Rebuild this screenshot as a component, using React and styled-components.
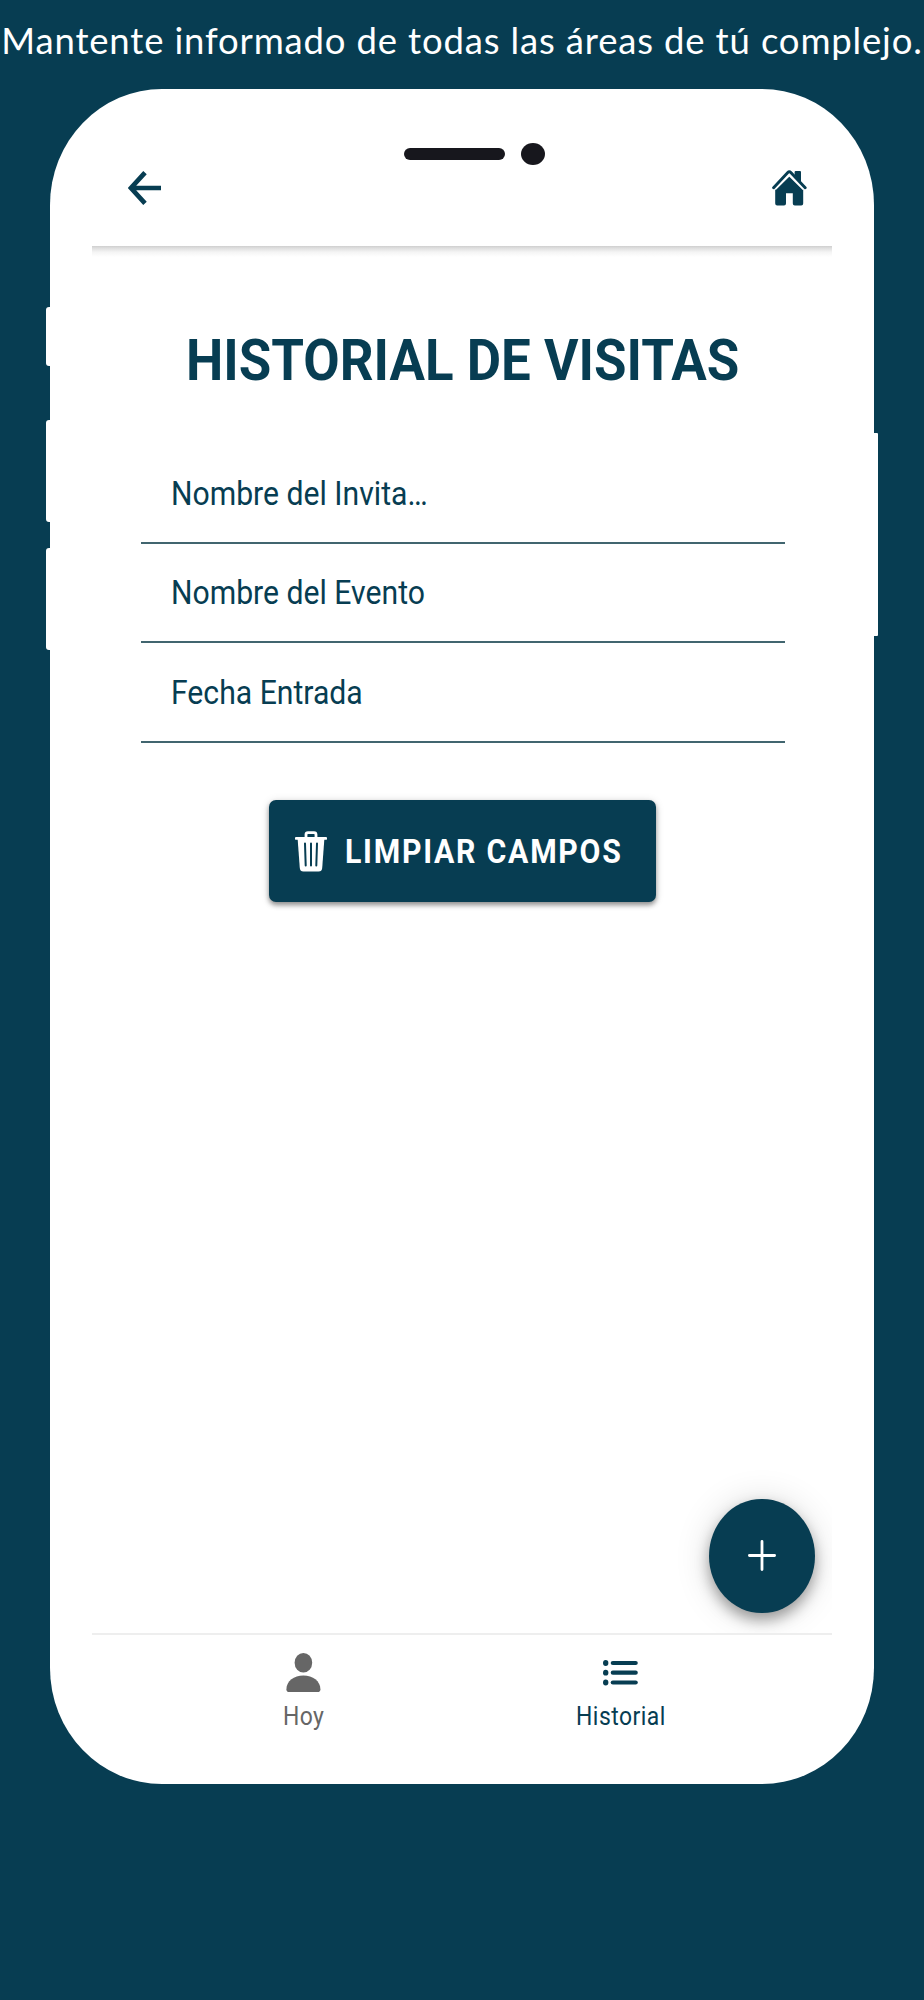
import React from 'react';
import styled, { createGlobalStyle } from 'styled-components';

const $navy = '#073d52';
const $white = '#fff';
const $gray = '#666';
const $ink = '#17171d';

const FIELDS = ['Nombre del Invita…', 'Nombre del Evento', 'Fecha Entrada'];

const BackIcon = () => (
  <svg width="33" height="34" viewBox="0 0 33 34" fill="none" stroke={$navy} strokeWidth="4.7">
    <path d="M17 1.6L3 17L17 32.4M3.5 17H33" />
  </svg>
);

const HomeIcon = () => (
  <svg width="35" height="36" viewBox="0 0 35 36" fill={$navy}>
    <path d="M22.6 2Q22.6 1 23.6 1H28Q29 1 29 2V13L22.6 7Z" />
    <path d="M17.3 5.6L31.2 19.4V33.6Q31.2 35.6 29.2 35.6H22.8Q20.8 35.6 20.8 33.6V23.2H14V33.6Q14 35.6 12 35.6H5.2Q3.2 35.6 3.2 33.6V19.4Z" />
    <path d="M2.6 18.8L17.3 4.2L32 18.8" fill="none" stroke={$white} strokeWidth="3.4" />
    <path d="M1.6 17.7L15.8 2.6Q17.3 1 18.8 2.6L33.2 17.7" fill="none" stroke={$navy} strokeWidth="2.9" strokeLinecap="round" />
  </svg>
);

const TrashIcon = () => (
  <svg width="32" height="41" viewBox="0 0 32 41" fill="none" stroke={$white}>
    <path d="M11 7V3.6Q11 1.6 13 1.6H19Q21 1.6 21 3.6V7" strokeWidth="2.8" />
    <path d="M1.2 7.4H30.8" strokeWidth="2.8" strokeLinecap="round" />
    <path d="M2.6 7.4H29.4L27.2 37Q26.9 40.6 23.6 40.6H8.4Q5.1 40.6 4.8 37Z" fill={$white} stroke="none" />
    <path d="M10 12.5L10.7 34.5M16 12.5V34.5M22 12.5L21.3 34.5" stroke={$navy} strokeWidth="2" strokeLinecap="round" />
  </svg>
);

const PlusIcon = () => (
  <svg width="28" height="31" viewBox="0 0 28 31" stroke={$white} strokeWidth="2.8" strokeLinecap="round">
    <path d="M14 1.4V29.6M1.4 15.5H26.6" />
  </svg>
);

const PersonIcon = () => (
  <svg width="35" height="39" viewBox="0 0 35 39" fill={$gray}>
    <ellipse cx="17.4" cy="9.8" rx="8.8" ry="9.8" />
    <path d="M0.4 36.2C0.4 28 8 22.4 17.4 22.4S34.4 28 34.4 36.2Q34.4 39 31.8 39H3Q0.4 39 0.4 36.2Z" />
  </svg>
);

const ListIcon = () => (
  <svg width="35" height="26" viewBox="0 0 35 26" fill={$navy} stroke={$navy} strokeWidth="4.2" strokeLinecap="round">
    {[3, 12.7, 22.5].map(y => (
      <React.Fragment key={y}>
        <ellipse cx="2.7" cy={y} rx="2.7" ry="2.9" stroke="none" />
        <path d={`M9.8 ${y}H32.7`} />
      </React.Fragment>
    ))}
  </svg>
);

const App = () => (
  <Page>
    <GlobalStyle />
    <Headline>Mantente informado de todas las áreas de tú complejo.</Headline>
    <Device>
      <Rail>
        <SideKey top={218} size={59} side="left" />
        <SideKey top={54} size={101.5} side="left" />
        <SideKey top={26.5} size={102} side="left" />
      </Rail>
      <Body>
        <Notch>
          <Speaker />
          <Camera />
        </Notch>
        <Toolbar>
          <IconButton aria-label="Volver"><BackIcon /></IconButton>
          <IconButton aria-label="Inicio"><HomeIcon /></IconButton>
        </Toolbar>
        <Content>
          <Title><Squeezed scale={0.911}>HISTORIAL DE VISITAS</Squeezed></Title>
          <Form>
            {FIELDS.map(field => (
              <Field key={field}><FieldLabel scale={0.914}>{field}</FieldLabel></Field>
            ))}
          </Form>
          <ClearButton>
            <TrashIcon />
            <ClearLabel scale={0.917}>LIMPIAR CAMPOS</ClearLabel>
          </ClearButton>
          <Fab aria-label="Agregar"><PlusIcon /></Fab>
        </Content>
        <TabBar>
          <Tab>
            <TabIcon><PersonIcon /></TabIcon>
            <Squeezed scale={0.917}>Hoy</Squeezed>
          </Tab>
          <Tab active>
            <TabIcon><ListIcon /></TabIcon>
            <Squeezed scale={0.917}>Historial</Squeezed>
          </Tab>
        </TabBar>
      </Body>
      <Rail>
        <SideKey top={344} size={203} side="right" />
      </Rail>
    </Device>
  </Page>
);

const styledConfig = { shouldForwardProp: prop => !['scale', 'active', 'top', 'size', 'side'].includes(prop) };

const GlobalStyle = createGlobalStyle`
  * {
    box-sizing: border-box;
  }
  body {
    background-color: ${$navy};
    margin: 0;
  }
  button {
    background: none;
    border: 0;
    font: inherit;
    padding: 0;
  }
  svg {
    display: block;
    flex: none;
  }
`;
const Page = styled.main`
  background-color: ${$navy};
  font-family: Roboto, 'Liberation Sans', sans-serif;
  height: 2000px;
  overflow: hidden;
  width: 924px;
`;
const Headline = styled.p`
  color: ${$white};
  font-family: Lato, 'Open Sans', sans-serif;
  font-size: 36.5px;
  height: 89px;
  letter-spacing: 0.84px;
  line-height: 80px;
  margin: 0;
  text-align: center;
  white-space: nowrap;
`;
const Device = styled.section`
  display: flex;
  height: 1695px;
  padding-left: 46px;
`;
const Rail = styled.div`
  display: flex;
  flex-direction: column;
  width: 4.3px;
`;
const SideKey = styled.i.withConfig(styledConfig)`
  background-color: ${$white};
  border-radius: ${props => (props.side === 'left' ? '3px 0 0 3px' : '0 1px 1px 0')};
  height: ${props => props.size}px;
  margin-top: ${props => props.top}px;
`;
const Body = styled.div`
  background-color: ${$white};
  border-radius: 112px / 116px;
  display: flex;
  flex-direction: column;
  padding: 53px 42px 0 41.7px;
  width: 823.5px;
`;
const Notch = styled.div`
  align-items: center;
  display: flex;
  gap: 16px;
  height: 23px;
  padding: 1px 0 0 312.3px;
`;
const Speaker = styled.i`
  background-color: ${$ink};
  border-radius: 6px;
  height: 12.5px;
  width: 100.5px;
`;
const Camera = styled.i`
  background-color: ${$ink};
  border-radius: 50%;
  height: 22.5px;
  width: 24.5px;
`;
const Toolbar = styled.header`
  display: flex;
  height: 81px;
  justify-content: space-between;
  padding: 5.4px 25px 0 36px;
`;
const IconButton = styled.button`
  height: 35px;
`;
const Content = styled.div`
  align-items: center;
  background: linear-gradient(#cfcfcf, #dedede 2px, #f4f4f4 6px, ${$white} 11px);
  display: flex;
  flex-direction: column;
  height: 1387px;
  overflow: hidden;
`;
const Squeezed = styled.span.withConfig(styledConfig)`
  display: block;
  transform: scaleX(${props => props.scale});
  white-space: nowrap;
`;
const Title = styled.h1`
  color: ${$navy};
  font-size: 58px;
  font-weight: 700;
  line-height: 68px;
  margin: 80px 0 0 1px;
`;
const Form = styled.div`
  margin: 50px 0 0 2px;
  width: 644px;
`;
const Field = styled.div`
  align-items: flex-end;
  border-bottom: 2px solid #41656f;
  color: ${$navy};
  display: flex;
  font-size: 33px;
  height: 99.7px;
  line-height: 40px;
  padding: 0 0 28px 30px;
`;
const FieldLabel = styled(Squeezed)`
  transform-origin: left;
`;
const ClearButton = styled.button`
  align-items: center;
  background-color: ${$navy};
  border-radius: 7px;
  box-shadow: 0 3px 5px rgba(0, 0, 0, 0.4), 0 1px 10px rgba(0, 0, 0, 0.12);
  color: ${$white};
  display: flex;
  flex: none;
  gap: 18px;
  height: 102.5px;
  margin: 56.7px 0 0 1px;
  padding-left: 26px;
  width: 387px;
`;
const ClearLabel = styled(Squeezed)`
  font-size: 33px;
  font-weight: 700;
  letter-spacing: 1.9px;
  transform-origin: left;
`;
const Fab = styled.button`
  align-items: center;
  align-self: flex-end;
  background-color: ${$navy};
  border-radius: 50%;
  box-shadow: 0 7px 14px rgba(0, 0, 0, 0.35), 0 2px 36px rgba(0, 0, 0, 0.14);
  display: flex;
  flex: none;
  height: 114.5px;
  justify-content: center;
  margin: auto 17px 20px 0;
  width: 105.5px;
`;
const TabBar = styled.nav`
  border-top: 2px solid #eee;
  display: flex;
  justify-content: center;
  padding-left: 1px;
`;
const Tab = styled.div.withConfig(styledConfig)`
  align-items: center;
  color: ${props => (props.active ? $navy : $gray)};
  display: flex;
  flex-direction: column;
  font-size: 25px;
  letter-spacing: 0.5px;
  line-height: 30px;
  padding-top: 18px;
  width: 317px;
`;
const TabIcon = styled.span`
  align-items: center;
  display: flex;
  height: 39px;
  margin-bottom: 10px;
`;

export default App;
